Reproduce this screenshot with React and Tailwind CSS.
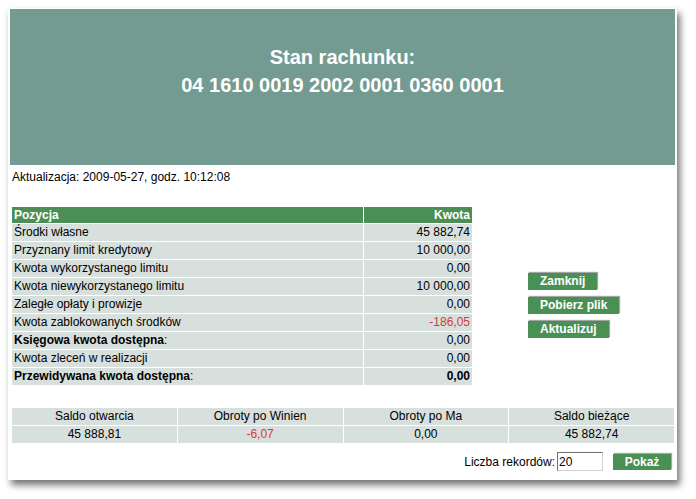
import React from "react";

const rows = [
  { label: "Środki własne", value: "45 882,74" },
  { label: "Przyznany limit kredytowy", value: "10 000,00" },
  { label: "Kwota wykorzystanego limitu", value: "0,00" },
  { label: "Kwota niewykorzystanego limitu", value: "10 000,00" },
  { label: "Zaległe opłaty i prowizje", value: "0,00" },
  { label: "Kwota zablokowanych środków", value: "-186,05", red: true },
  { label: "Księgowa kwota dostępna", value: "0,00", boldLabel: true },
  { label: "Kwota zleceń w realizacji", value: "0,00" },
  { label: "Przewidywana kwota dostępna", value: "0,00", boldLabel: true, boldValue: true },
];

function Btn({ children }) {
  return (
    <button className="h-[17px] px-[12px] bg-[#4a9055] text-white font-bold text-[12px] leading-[17px] text-left shadow-[1px_-1px_1px_rgba(0,0,0,0.35)] self-start">
      {children}
    </button>
  );
}

export default function App() {
  return (
    <div
      className="w-[696px] h-[499px] bg-white pt-[8px] pl-[8px] text-black"
      style={{ fontFamily: '"Liberation Sans", Arial, sans-serif' }}
    >
      <div className="w-[669px] h-[472px] bg-white shadow-[3px_5px_7px_rgba(0,0,0,0.55)] pt-[1px]">
        <div className="mx-[2px] h-[156px] bg-[#749b91] text-white text-center font-bold text-[20px] leading-[28px] pt-[34px]">
          <div>Stan rachunku:</div>
          <div>04 1610 0019 2002 0001 0360 0001</div>
        </div>

        <div className="pl-[4px] mt-[5px] text-[12px] leading-[14px]">
          Aktualizacja: 2009-05-27, godz. 10:12:08
        </div>

        <div className="flex pl-[4px] mt-[23px]">
          <div className="w-[460px] grid grid-cols-[351px_108px] gap-px text-[12px]">
            <div className="h-[16px] leading-[16px] bg-[#4b8f55] text-white font-bold pl-[2px]">Pozycja</div>
            <div className="h-[16px] leading-[16px] bg-[#4b8f55] text-white font-bold text-right pr-[2px]">Kwota</div>
            {rows.map((r) => (
              <React.Fragment key={r.label}>
                <div className="h-[17px] leading-[17px] bg-[#d8e0dd] pl-[2px]">
                  {r.boldLabel ? (
                    <>
                      <span className="font-bold">{r.label}</span>:
                    </>
                  ) : (
                    r.label
                  )}
                </div>
                <div
                  className={
                    "h-[17px] leading-[17px] bg-[#d8e0dd] text-right pr-[2px] " +
                    (r.red ? "text-[#d43a3a] " : "") +
                    (r.boldValue ? "font-bold" : "")
                  }
                >
                  {r.value}
                </div>
              </React.Fragment>
            ))}
          </div>
          <div className="ml-[56px] mt-[66px] flex flex-col gap-[7px]">
            <Btn>Zamknij</Btn>
            <Btn>Pobierz plik</Btn>
            <Btn>Aktualizuj</Btn>
          </div>
        </div>

        <div className="pl-[4px] mt-[23px]">
          <div className="w-[662px] grid grid-cols-4 gap-px text-[12px] text-center">
            <div className="h-[17px] leading-[17px] bg-[#d8e0dd]">Saldo otwarcia</div>
            <div className="h-[17px] leading-[17px] bg-[#d8e0dd]">Obroty po Winien</div>
            <div className="h-[17px] leading-[17px] bg-[#d8e0dd]">Obroty po Ma</div>
            <div className="h-[17px] leading-[17px] bg-[#d8e0dd]">Saldo bieżące</div>
            <div className="h-[17px] leading-[17px] bg-[#d8e0dd]">45 888,81</div>
            <div className="h-[17px] leading-[17px] bg-[#d8e0dd] text-[#d43a3a]">-6,07</div>
            <div className="h-[17px] leading-[17px] bg-[#d8e0dd]">0,00</div>
            <div className="h-[17px] leading-[17px] bg-[#d8e0dd]">45 882,74</div>
          </div>
        </div>

        <div className="flex justify-end items-center mt-[9px] pr-[6px] text-[12px]">
          <span className="mr-[2px]">Liczba rekordów:</span>
          <input
            readOnly
            value="20"
            className="w-[46px] h-[19px] border border-t-[#6f6f6f] border-l-[#6f6f6f] border-b-[#d0d0d0] border-r-[#d0d0d0] px-[1px] text-[12px] outline-none"
            style={{ fontFamily: '"Liberation Sans", Arial, sans-serif' }}
          />
          <button className="ml-[10px] w-[58px] h-[16px] bg-[#4a9055] text-white font-bold text-[12px] leading-[16px] shadow-[1px_-1px_1px_rgba(0,0,0,0.35)]">
            Pokaż
          </button>
        </div>
      </div>
    </div>
  );
}
